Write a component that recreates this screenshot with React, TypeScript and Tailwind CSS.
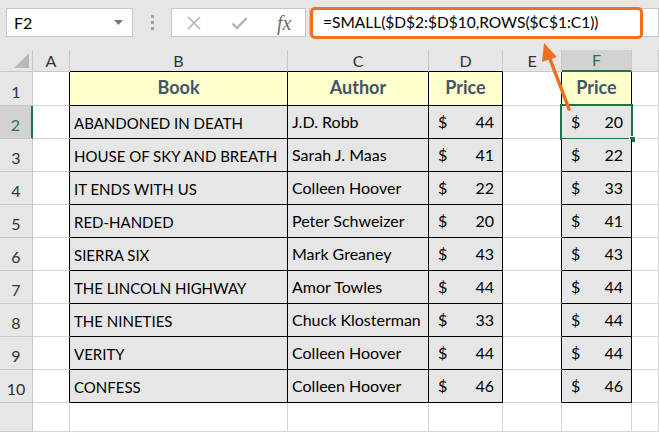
import React from "react";

const FONT = { fontFamily: "Lato, 'Liberation Sans', sans-serif" };

const books: [string, string, number, number][] = [
  ["ABANDONED IN DEATH", "J.D. Robb", 44, 20],
  ["HOUSE OF SKY AND BREATH", "Sarah J. Maas", 41, 22],
  ["IT ENDS WITH US", "Colleen Hoover", 22, 33],
  ["RED-HANDED", "Peter Schweizer", 20, 41],
  ["SIERRA SIX", "Mark Greaney", 43, 43],
  ["THE LINCOLN HIGHWAY", "Amor Towles", 44, 44],
  ["THE NINETIES", "Chuck Klosterman", 33, 44],
  ["VERITY", "Colleen Hoover", 44, 44],
  ["CONFESS", "Colleen Hoover", 46, 46],
];

const grid = "border-r border-b border-[#d4d4d4] bg-white";
const table = "border-r border-b border-black";
const head = table + " flex items-end justify-center bg-[#ffffcc] pb-[4px] text-[18px] font-bold text-[#44546a]";

function Money({ value }: { value: number }) {
  return (
    <div className="flex h-full items-end justify-between pb-[4px] pl-[9px] pr-[8px] text-[16px] text-black">
      <span>$</span>
      <span>{value}</span>
    </div>
  );
}

function ColHeader({ label, className = "" }: { label: string; className?: string }) {
  return (
    <div
      className={
        "flex items-center justify-center border-r border-b border-[#c8c8c8] bg-[#e6e6e6] text-[16px] text-[#333] " +
        className
      }
    >
      {label}
    </div>
  );
}

function RowHeader({ n, active = false }: { n: number | string; active?: boolean }) {
  return (
    <div
      className={
        active
          ? "flex items-end justify-center border-b border-[#c8c8c8] border-r-2 border-r-[#217346] bg-[#d2d2d2] pb-[1px] text-[16px] text-[#217346]"
          : "flex items-end justify-center border-r border-b border-[#c8c8c8] bg-[#e6e6e6] pb-[1px] text-[16px] text-[#333]"
      }
    >
      {n}
    </div>
  );
}

function Toolbar() {
  return (
    <div className="flex h-[50px] items-start bg-[#e6e6e6] pt-[8px]">
      {/* name box */}
      <div className="ml-[6px] flex h-[29px] w-[127px] items-center justify-between border border-[#c6c6c6] bg-white pl-[7px] pr-[9px]">
        <span className="text-[16px] text-black">F2</span>
        <svg width="9" height="5" viewBox="0 0 9 5">
          <path d="M0 0h9L4.5 5z" fill="#777" />
        </svg>
      </div>
      {/* grip dots */}
      <div className="flex h-[29px] w-[38px] flex-col items-center justify-center gap-[3px]">
        <span className="h-[3px] w-[3px] bg-[#a0a0a0]" />
        <span className="h-[3px] w-[3px] bg-[#a0a0a0]" />
        <span className="h-[3px] w-[3px] bg-[#a0a0a0]" />
      </div>
      {/* cancel / enter / fx */}
      <div className="flex h-[29px] w-[135px] items-center border border-[#c6c6c6] bg-white">
        <svg className="ml-[14px]" width="16" height="16" viewBox="0 0 16 16">
          <path d="M2 2l12 12M14 2L2 14" stroke="#b4b4b4" strokeWidth="1.6" />
        </svg>
        <svg className="ml-[29px]" width="17" height="14" viewBox="0 0 17 14">
          <path d="M1.5 7.5l4.5 4.5L15.5 2" stroke="#b4b4b4" strokeWidth="2.4" fill="none" />
        </svg>
        <span
          className="ml-[29px] text-[20px] italic leading-none text-[#6b6b6b]"
          style={{ fontFamily: "'Liberation Serif', serif" }}
        >
          fx
        </span>
      </div>
      {/* formula input */}
      <div className="relative ml-[3px] h-[29px] flex-1 border border-[#c6c6c6] bg-white">
        <div className="absolute left-0 top-[-2px] flex h-[32px] w-[333px] items-center rounded-[5px] border-[3px] border-[#f0701f] pl-[10px]">
          <span className="text-[15.5px] text-black">=SMALL($D$2:$D$10,ROWS($C$1:C1))</span>
        </div>
      </div>
    </div>
  );
}

export default function App() {
  return (
    <div className="relative h-[432px] w-[659px] overflow-hidden bg-white" style={FONT}>
      <Toolbar />
      <div className="grid grid-cols-[33px_37px_218px_141px_74px_59px_70px_27px] grid-rows-[22px_34px_repeat(9,33px)_29px]">
        {/* column header row */}
        <div className="relative border-r border-b border-[#c8c8c8] bg-[#e6e6e6]">
          <svg className="absolute bottom-[3px] right-[3px]" width="15" height="15" viewBox="0 0 15 15">
            <path d="M15 0V15H0z" fill="#b9b9b9" />
          </svg>
        </div>
        <ColHeader label="A" />
        <ColHeader label="B" className="border-b-black" />
        <ColHeader label="C" className="border-b-black" />
        <ColHeader label="D" className="border-b-black" />
        <ColHeader label="E" />
        <div className="flex items-center justify-center border-r border-[#c8c8c8] border-b-2 border-b-[#217346] bg-[#d2d2d2] text-[16px] text-[#217346]">
          F
        </div>
        <ColHeader label="" />

        {/* row 1 */}
        <RowHeader n={1} />
        <div className={grid + " border-r-black"} />
        <div className={head}>Book</div>
        <div className={head}>Author</div>
        <div className={head}>Price</div>
        <div className={grid + " border-r-black"} />
        <div className={head}>Price</div>
        <div className={grid} />

        {/* rows 2-10 */}
        {books.map(([title, author, price, sorted], i) => (
          <React.Fragment key={title}>
            <RowHeader n={i + 2} active={i === 0} />
            <div className={grid + " border-r-black"} />
            <div className={table + " flex items-end whitespace-nowrap bg-[#e7e6e6] pb-[4px] pl-[4px] text-[15px] text-black"}>
              {title}
            </div>
            <div className={table + " flex items-end whitespace-nowrap bg-[#e7e6e6] pb-[4px] pl-[4px] text-[16px] text-black"}>
              {author}
            </div>
            <div className={table + " bg-[#e7e6e6]"}>
              <Money value={price} />
            </div>
            <div className={grid + " border-r-black"} />
            <div className={table + " relative bg-[#e7e6e6]"}>
              <Money value={sorted} />
              {i === 0 && (
                <>
                  <span className="absolute inset-[-2px] border-2 border-[#217346]" />
                  <span className="absolute bottom-[-5px] right-[-5px] h-[7px] w-[7px] border border-white bg-[#217346]" />
                </>
              )}
            </div>
            <div className={grid} />
          </React.Fragment>
        ))}

        {/* row 11 */}
        <RowHeader n="" />
        <div className={grid} />
        <div className={grid} />
        <div className={grid} />
        <div className={grid} />
        <div className={grid} />
        <div className={grid} />
        <div className={grid} />
      </div>

      {/* callout arrow */}
      <svg className="pointer-events-none absolute left-0 top-0" width="659" height="432" viewBox="0 0 659 432">
        <path d="M569 109L550 59" stroke="#f0701f" strokeWidth="3.5" strokeLinecap="round" />
        <path d="M544 43L557 57L542 62z" fill="#f0701f" />
      </svg>
    </div>
  );
}
